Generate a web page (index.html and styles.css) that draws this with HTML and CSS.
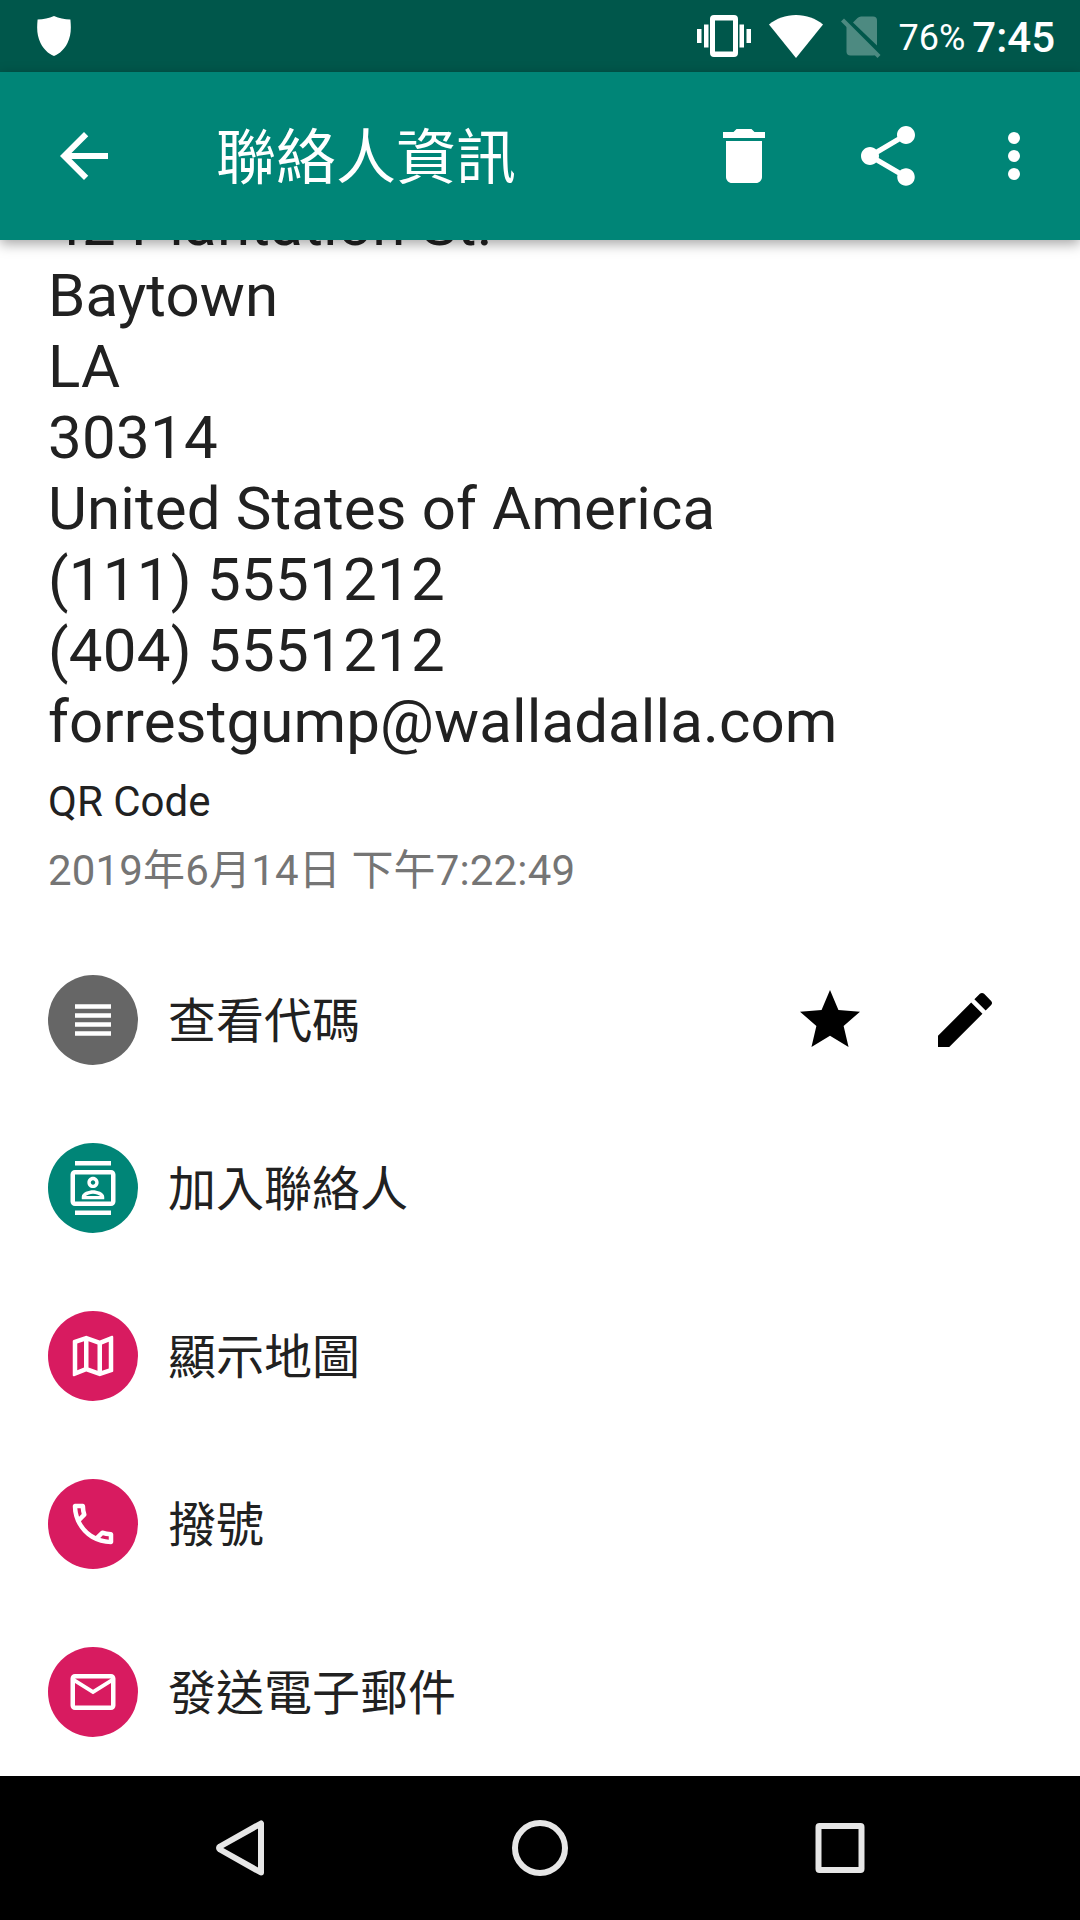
FILE: index.html
```html
<!DOCTYPE html>
<html lang="zh-Hant">
<head>
  <meta charset="UTF-8">
  <title>聯絡人資訊</title>
  <link rel="stylesheet" href="styles.css">
</head>
<body>
  <div class="page">
    <div class="status">
      <svg class="shield" viewBox="0 0 34 40"><path d="M17 0C12 2.4 6.500 3.300.6 3.500C-.4 14 .2 20 3.500 27C6.500 33 11 37.600 17 40C23 37.600 27.500 33 30.500 27C33.800 20 34.400 14 33.400 3.500C27.500 3.300 22 2.400 17 0z"/></svg>
      <div class="status_right">
        <svg class="vibrate" viewBox="0 0 54 42"><path d="M0 14h4.500v14H0zM7 9.500h4.500v23H7zM42.500 9.500H47v23h-4.500zM49.500 14H54v14h-4.500z"/><path fill-rule="evenodd" d="M17 0h20q4 0 4 4v34q0 4-4 4H17q-4 0-4-4V4q0-4 4-4zM18 5.500v31h18v-31z"/></svg>
        <svg class="wifi" viewBox="0 0 54 43"><path d="M27 43L0 9.500C7.500 3.500 16.500 0 27 0s19.500 3.500 27 9.500z"/></svg>
        <svg class="sim" viewBox="0 0 40 43"><path d="M12 6.500l4.500-4.500q1.500-1.500 3.500-1.500H32q4 0 4 4V29.500z"/><path d="M5.500 8L35.500 38q-1 1.500-3.500 1.500H9.500q-4 0-4-4z"/><path d="M3 2.500L39.500 39 36.500 42 0 5.500z"/></svg>
        <span class="battery">76%</span>
        <span class="time">7:45</span>
      </div>
    </div>
    <div class="bar">
      <svg class="icon" viewBox="0 0 24 24"><path d="M20 11H7.830l5.590-5.590L12 4l-8 8 8 8 1.410-1.410L7.830 13H20v-2z"/></svg>
      <h1 class="title">聯絡人資訊</h1>
      <div class="tools">
        <svg class="icon" viewBox="0 0 24 24"><path d="M6 19c0 1.100.9 2 2 2h8c1.100 0 2-.9 2-2V7H6v12zM19 4h-3.500l-1-1h-5l-1 1H5v2h14V4z"/></svg>
        <svg class="icon share" viewBox="0 0 24 24"><path d="M18 16.080c-.76 0-1.440.3-1.960.77L8.910 12.700c.05-.23.09-.46.09-.7s-.04-.47-.09-.7l7.050-4.110c.54.5 1.250.81 2.040.81 1.660 0 3-1.340 3-3s-1.340-3-3-3-3 1.340-3 3c0 .24.04.47.09.7L8.040 9.810C7.500 9.310 6.790 9 6 9c-1.660 0-3 1.340-3 3s1.340 3 3 3c.79 0 1.500-.31 2.040-.81l7.120 4.160c-.05.21-.08.43-.08.65 0 1.610 1.310 2.920 2.920 2.920s2.920-1.310 2.920-2.920-1.310-2.920-2.920-2.920z"/></svg>
        <svg class="icon" viewBox="0 0 24 24"><circle cx="12" cy="6" r="2"/><circle cx="12" cy="12" r="2"/><circle cx="12" cy="18" r="2"/></svg>
      </div>
    </div>
    <div class="content">
      <div class="info">
        <div class="number">42 Plantation St.</div>
        <div>Baytown</div>
        <div>LA</div>
        <div class="number">30314</div>
        <div>United States of America</div>
        <div class="number">(111) 5551212</div>
        <div class="number">(404) 5551212</div>
        <div>forrestgump@walladalla.com</div>
      </div>
      <div class="type">QR Code</div>
      <div class="date">2019年6月14日 下午7:22:49</div>
      <div class="list">
        <div class="item">
          <div class="round gray"><svg viewBox="0 0 24 24"><path d="M4 15h16v-2H4v2zm0 4h16v-2H4v2zm0-8h16V9H4v2zm0-6v2h16V5H4z"/></svg></div>
          <span class="label">查看代碼</span>
          <div class="actions">
            <svg class="icon" viewBox="0 0 24 24"><path d="M12 17.270L18.180 21l-1.640-7.030L22 9.240l-7.190-.61L12 2 9.190 8.630 2 9.240l5.460 4.730L5.820 21z"/></svg>
            <svg class="icon" viewBox="0 0 24 24"><path d="M3 17.250V21h3.750L17.810 9.940l-3.750-3.750L3 17.250zM20.710 7.040c.39-.39.39-1.020 0-1.410l-2.340-2.340c-.39-.39-1.020-.39-1.410 0l-1.830 1.830 3.750 3.750 1.830-1.830z"/></svg>
          </div>
        </div>
        <div class="item">
          <div class="round green"><svg viewBox="0 0 24 24"><path d="M20 4H4c-1.100 0-2 .9-2 2v12c0 1.100.9 2 2 2h16c1.100 0 2-.9 2-2V6c0-1.100-.9-2-2-2zm0 14H4V6h16v12zM4 0h16v2H4zm0 22h16v2H4zm8-10c1.380 0 2.500-1.120 2.500-2.500S13.380 7 12 7 9.500 8.120 9.500 9.500 10.620 12 12 12zm0-3.500c.55 0 1 .45 1 1s-.45 1-1 1-1-.45-1-1 .45-1 1-1zm5 7.490C17 13.900 13.690 13 12 13s-5 .9-5 2.990V17h10v-1.010zm-8.190-.49c.61-.52 2.030-1 3.190-1 1.170 0 2.590.48 3.200 1H8.810z"/></svg></div>
          <span class="label">加入聯絡人</span>
        </div>
        <div class="item">
          <div class="round pink"><svg viewBox="0 0 24 24"><path d="M20.500 3l-.16.03L15 5.100 9 3 3.360 4.900c-.21.07-.36.25-.36.48V20.500c0 .28.22.5.5.5l.16-.03L9 18.900l6 2.100 5.640-1.900c.21-.07.36-.25.36-.48V3.500c0-.28-.22-.5-.5-.5zM10 5.470l4 1.400v11.660l-4-1.400V5.470zm-5 .99l3-1.010v11.700l-3 1.160V6.460zm14 11.080l-3 1.010V6.860l3-1.160v11.840z"/></svg></div>
          <span class="label">顯示地圖</span>
        </div>
        <div class="item">
          <div class="round pink"><svg viewBox="0 0 24 24"><path d="M6.540 5c.06.89.21 1.760.45 2.590l-1.200 1.200c-.41-1.200-.67-2.470-.76-3.790h1.510m9.860 12.020c.85.24 1.720.39 2.600.45v1.490c-1.320-.09-2.590-.35-3.800-.75l1.200-1.190M7.500 3H4c-.55 0-1 .45-1 1 0 9.390 7.610 17 17 17 .55 0 1-.45 1-1v-3.490c0-.55-.45-1-1-1-1.240 0-2.450-.2-3.570-.57-.1-.04-.21-.05-.31-.05-.26 0-.51.1-.71.29l-2.200 2.200c-2.830-1.450-5.150-3.760-6.590-6.590l2.200-2.200c.28-.28.36-.67.25-1.020C8.700 6.450 8.500 5.250 8.500 4c0-.55-.45-1-1-1z"/></svg></div>
          <span class="label">撥號</span>
        </div>
        <div class="item">
          <div class="round pink"><svg viewBox="0 0 24 24"><path d="M22 6c0-1.100-.9-2-2-2H4c-1.100 0-2 .9-2 2v12c0 1.100.9 2 2 2h16c1.100 0 2-.9 2-2V6zm-2 0l-8 5-8-5h16zm0 12H4V8l8 5 8-5v10z"/></svg></div>
          <span class="label">發送電子郵件</span>
        </div>
      </div>
    </div>
    <div class="nav">
      <svg viewBox="0 0 72 72"><path d="M57 11.500v49L16 37.500q-2-1.500 0-3z"/></svg>
      <svg viewBox="0 0 72 72"><circle cx="36" cy="36" r="25"/></svg>
      <svg viewBox="0 0 72 72"><rect x="14.500" y="14" width="43" height="44" rx="1"/></svg>
    </div>
  </div>
</body>
</html>
```
FILE: styles.css
```css
body {
  margin: 0;
  font-family: Roboto, "Noto Sans CJK TC", sans-serif;
  color: #212121;
  background-color: #fff;
}
svg {
  display: block;
  flex: none;
}
.page {
  width: 1080px;
  height: 1920px;
  display: flex;
  flex-direction: column;
  overflow: hidden;
}

/* 狀態列 */
.status {
  flex: none;
  height: 72px;
  box-sizing: border-box;
  padding: 0 25px 0 37px;
  display: flex;
  justify-content: space-between;
  align-items: center;
  background-color: #00574b;
  color: #fff;
  fill: #fff;
}
.shield {
  width: 34px;
  height: 40px;
}
.status_right {
  display: flex;
  align-items: center;
}
.vibrate {
  width: 54px;
  height: 42px;
}
.wifi {
  width: 54px;
  height: 43px;
  margin-left: 18px;
}
.sim {
  width: 40px;
  height: 43px;
  margin-left: 18px;
  margin-top: 2px;
  opacity: 0.3;
}
.battery {
  margin-left: 17px;
  font-size: 36px;
  line-height: 72px;
  padding-top: 3px;
}
.time {
  margin-left: 7px;
  font-size: 42px;
  font-weight: 500;
  line-height: 72px;
  padding-top: 3px;
}

/* 標題列 */
.bar {
  flex: none;
  z-index: 1;
  height: 168px;
  box-sizing: border-box;
  padding: 0 30px 0 48px;
  display: flex;
  align-items: center;
  background-color: #008577;
  box-shadow: 0 4px 12px rgba(0, 0, 0, 0.35);
  color: #fff;
  fill: #fff;
}
.icon {
  width: 72px;
  height: 72px;
}
.title {
  margin: 0 0 0 96px;
  padding-top: 5px;
  font-size: 60px;
  font-weight: 400;
  line-height: 88px;
}
.tools {
  margin-left: auto;
  display: flex;
}
.share {
  margin: 0 54px 0 72px;
}

/* 內容 */
.content {
  flex: 1;
  min-height: 0;
  padding: 0 48px;
  overflow: hidden;
}
.info {
  margin-top: -51px;
  font-size: 60px;
  line-height: 71px;
  letter-spacing: 0.12px;
}
.number {
  letter-spacing: 0.26px;
}
.type {
  margin-top: 20px;
  font-size: 42px;
  line-height: 50px;
}
.date {
  margin-top: 13px;
  font-size: 42px;
  line-height: 62px;
  letter-spacing: 0.16px;
  color: #757575;
}
.list {
  margin-top: 34px;
}
.item {
  height: 168px;
  display: flex;
  align-items: center;
}
.round {
  width: 90px;
  height: 90px;
  border-radius: 50%;
  display: flex;
  align-items: center;
  justify-content: center;
}
.round svg {
  width: 54px;
  height: 54px;
  fill: #fff;
}
.gray {
  background-color: #666;
}
.green {
  background-color: #008577;
}
.pink {
  background-color: #d81b60;
}
.label {
  margin-left: 30px;
  padding-bottom: 7px;
  font-size: 48px;
}
.actions {
  margin-left: auto;
  padding-right: 31px;
  display: flex;
  gap: 63px;
}

/* 導覽列 */
.nav {
  flex: none;
  height: 144px;
  display: flex;
  justify-content: center;
  align-items: center;
  gap: 228px;
  background-color: #000;
}
.nav svg {
  width: 72px;
  height: 72px;
  fill: none;
  stroke: #e6e6e6;
  stroke-width: 6;
  stroke-linejoin: round;
}
```
